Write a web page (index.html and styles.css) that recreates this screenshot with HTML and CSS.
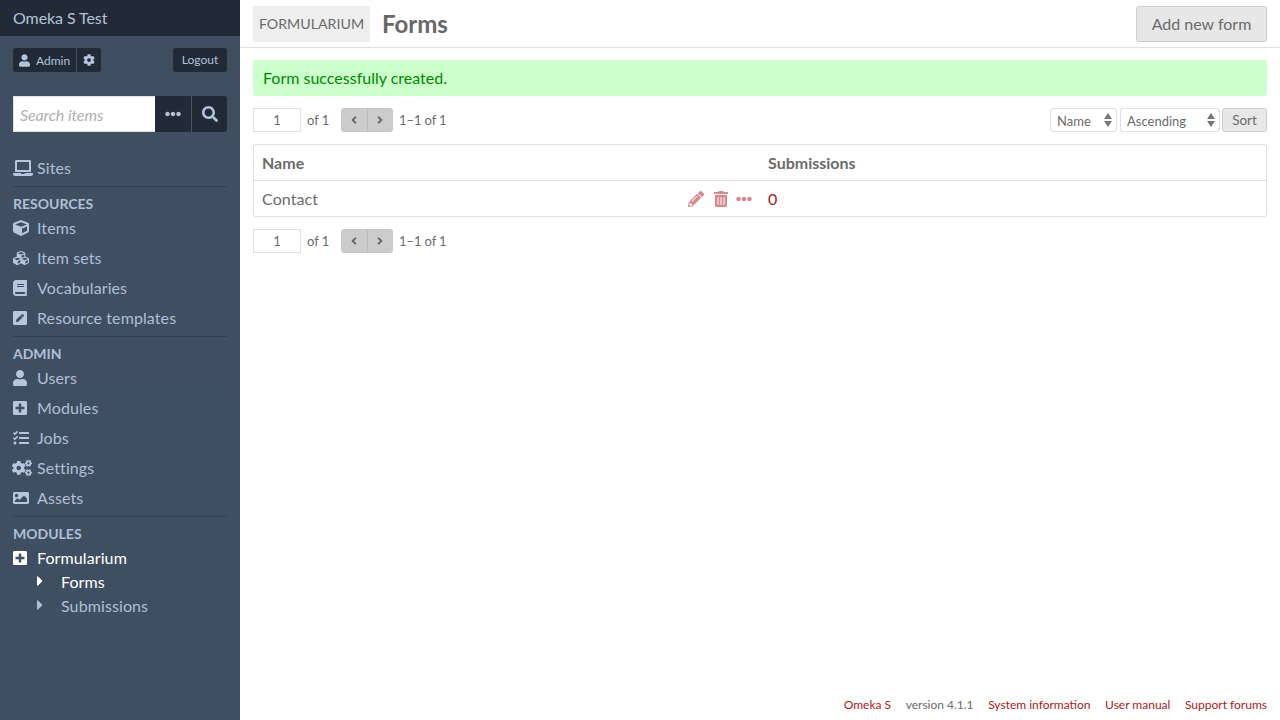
FILE: index.html
```html
<!DOCTYPE html>
<html lang="en">
<head>
<meta charset="utf-8">
<title>Forms · Omeka S Test</title>
<link rel="stylesheet" href="styles.css">
</head>
<body>
<svg class="defs" aria-hidden="true">
<symbol id="user" viewBox="0 0 448 512"><path d="M224 256c70.7 0 128-57.3 128-128S294.7 0 224 0 96 57.3 96 128s57.3 128 128 128zm89.6 32h-16.7c-22.2 10.2-46.9 16-72.9 16s-50.6-5.8-72.9-16h-16.7C60.2 288 0 348.2 0 422.4V464c0 26.5 21.5 48 48 48h352c26.5 0 48-21.5 48-48v-41.6c0-74.2-60.2-134.4-134.4-134.4z"/></symbol>
<symbol id="cog" viewBox="0 0 512 512"><path d="M487.4 315.7l-42.6-24.6c4.3-23.2 4.3-47 0-70.2l42.6-24.6c4.9-2.8 7.1-8.6 5.5-14-11.1-35.6-30-67.8-54.7-94.6-3.8-4.1-10-5.1-14.8-2.3L380.8 110c-17.9-15.4-38.5-27.3-60.8-35.1V25.8c0-5.6-3.9-10.5-9.4-11.7-36.7-8.2-74.3-7.8-109.2 0-5.5 1.2-9.4 6.1-9.4 11.7V75c-22.2 7.9-42.8 19.8-60.8 35.1L88.7 85.5c-4.9-2.8-11-1.9-14.8 2.3-24.7 26.7-43.6 58.9-54.7 94.6-1.7 5.4.6 11.2 5.5 14L67.3 221c-4.3 23.2-4.3 47 0 70.2l-42.6 24.6c-4.9 2.8-7.1 8.6-5.5 14 11.1 35.6 30 67.8 54.7 94.6 3.8 4.1 10 5.1 14.8 2.3l42.6-24.6c17.9 15.4 38.5 27.3 60.8 35.1v49.2c0 5.6 3.9 10.5 9.4 11.7 36.7 8.2 74.3 7.8 109.2 0 5.5-1.2 9.4-6.1 9.4-11.7v-49.2c22.2-7.9 42.8-19.8 60.8-35.1l42.6 24.6c4.9 2.8 11 1.9 14.8-2.3 24.7-26.7 43.6-58.9 54.7-94.6 1.5-5.5-.7-11.3-5.6-14.1zM256 336c-44.1 0-80-35.9-80-80s35.9-80 80-80 80 35.9 80 80-35.9 80-80 80z"/></symbol>
<symbol id="search" viewBox="0 0 512 512"><path d="M505 442.7L405.3 343c-4.5-4.5-10.6-7-17-7H372c27.6-35.3 44-79.7 44-128C416 93.1 322.9 0 208 0S0 93.1 0 208s93.1 208 208 208c48.3 0 92.7-16.4 128-44v16.3c0 6.4 2.5 12.5 7 17l99.7 99.7c9.4 9.4 24.6 9.4 33.9 0l28.3-28.3c9.4-9.4 9.4-24.6.1-34zM208 336c-70.7 0-128-57.2-128-128 0-70.7 57.2-128 128-128 70.7 0 128 57.2 128 128 0 70.7-57.2 128-128 128z"/></symbol>
<symbol id="dots" viewBox="0 0 512 512"><path d="M328 256c0 39.8-32.2 72-72 72s-72-32.2-72-72 32.2-72 72-72 72 32.2 72 72zm104-72c-39.8 0-72 32.2-72 72s32.2 72 72 72 72-32.2 72-72-32.2-72-72-72zm-352 0c-39.8 0-72 32.2-72 72s32.2 72 72 72 72-32.2 72-72-32.2-72-72-72z"/></symbol>
<symbol id="laptop" viewBox="0 0 640 512"><path d="M624 416H381.54c-.74 19.81-14.71 32-32.74 32H288c-18.69 0-33.02-17.47-32.77-32H16c-8.8 0-16 7.2-16 16v16c0 35.2 28.8 64 64 64h512c35.2 0 64-28.8 64-64v-16c0-8.8-7.2-16-16-16zM576 48c0-26.4-21.6-48-48-48H112C85.6 0 64 21.6 64 48v336h512V48zm-64 272H128V64h384v256z"/></symbol>
<symbol id="cube" viewBox="0 0 512 512"><path d="M239.1 6.3l-208 78c-18.7 7-31.1 25-31.1 45v225.1c0 18.2 10.3 34.8 26.5 42.9l208 104c13.5 6.8 29.4 6.8 42.9 0l208-104c16.3-8.1 26.5-24.8 26.5-42.9V129.3c0-20-12.4-37.9-31.1-44.9l-208-78C262 2.2 250 2.2 239.1 6.3zM256 68.4l192 72v1.1l-192 78-192-78v-1.1l192-72zm32 356V275.5l160-65v133.9l-160 80z"/></symbol>
<symbol id="cubes" viewBox="0 0 512 512"><path d="M488.6 250.2L392 214V105.5c0-15-9.3-28.4-23.4-33.7l-100-37.5c-8.1-3.1-17.1-3.1-25.3 0l-100 37.5c-14.1 5.3-23.4 18.7-23.4 33.7V214l-96.6 36.2C9.3 255.5 0 268.9 0 283.9V394c0 13.6 7.7 26.1 19.9 32.2l100 50c10.1 5.1 22.1 5.1 32.2 0l103.9-52 103.9 52c10.1 5.1 22.1 5.1 32.2 0l100-50c12.2-6.1 19.9-18.6 19.9-32.2V283.9c0-15-9.3-28.4-23.4-33.7zM358 214.8l-85 31.9v-68.2l85-37v73.3zM154 104.1l102-38.2 102 38.2v.6l-102 41.4-102-41.4v-.6zm84 291.1l-85 42.5v-79.1l85-38.8v75.4zm0-112l-102 41.4-102-41.4v-.6l102-38.2 102 38.2v.6zm240 112l-85 42.5v-79.1l85-38.8v75.4zm0-112l-102 41.4-102-41.4v-.6l102-38.2 102 38.2v.6z"/></symbol>
<symbol id="book" viewBox="0 0 448 512"><path d="M448 360V24c0-13.3-10.7-24-24-24H96C43 0 0 43 0 96v320c0 53 43 96 96 96h328c13.3 0 24-10.7 24-24v-16c0-7.5-3.5-14.3-8.9-18.7-4.2-15.4-4.2-59.3 0-74.7 5.4-4.3 8.9-11.1 8.9-18.6zM128 134c0-3.3 2.7-6 6-6h212c3.3 0 6 2.7 6 6v20c0 3.3-2.7 6-6 6H134c-3.3 0-6-2.7-6-6v-20zm0 64c0-3.3 2.7-6 6-6h212c3.3 0 6 2.7 6 6v20c0 3.3-2.7 6-6 6H134c-3.3 0-6-2.7-6-6v-20zm253.4 250H96c-17.7 0-32-14.3-32-32 0-17.6 14.4-32 32-32h285.4c-1.9 17.1-1.9 46.9 0 64z"/></symbol>
<symbol id="pensq" viewBox="0 0 448 512"><path d="M400 480H48c-26.5 0-48-21.5-48-48V80c0-26.5 21.5-48 48-48h352c26.5 0 48 21.5 48 48v352c0 26.5-21.5 48-48 48zM238.1 177.9L102.4 313.6l-6.3 57.1c-.8 7.6 5.6 14.1 13.3 13.3l57.1-6.3L302.2 242c2.3-2.3 2.3-6.1 0-8.5L246.7 178c-2.5-2.4-6.3-2.4-8.6-.1zM345 165.1L314.9 135c-9.4-9.4-24.6-9.4-33.9 0l-23.1 23.1c-2.3 2.3-2.3 6.1 0 8.5l55.5 55.5c2.3 2.3 6.1 2.3 8.5 0L345 199c9.3-9.3 9.3-24.5 0-33.9z"/></symbol>
<symbol id="plussq" viewBox="0 0 448 512"><path d="M400 32H48C21.5 32 0 53.5 0 80v352c0 26.5 21.5 48 48 48h352c26.5 0 48-21.5 48-48V80c0-26.5-21.5-48-48-48zm-32 252c0 6.6-5.4 12-12 12h-92v92c0 6.6-5.4 12-12 12h-56c-6.6 0-12-5.4-12-12v-92H92c-6.6 0-12-5.4-12-12v-56c0-6.6 5.4-12 12-12h92v-92c0-6.6 5.4-12 12-12h56c6.6 0 12 5.4 12 12v92h92c6.6 0 12 5.4 12 12v56z"/></symbol>
<symbol id="tasks" viewBox="0 0 512 512"><path d="M139.61 35.5a12 12 0 0 0-17 0L58.93 98.81l-22.7-22.12a12 12 0 0 0-17 0L3.53 92.41a12 12 0 0 0 0 17l47.59 47.4a12.78 12.78 0 0 0 17.61 0l15.59-15.62L156.52 69a12.09 12.09 0 0 0 .09-17zm0 159.19a12 12 0 0 0-17 0l-63.68 63.72-22.7-22.1a12 12 0 0 0-17 0L3.53 252a12 12 0 0 0 0 17L51 316.5a12.77 12.77 0 0 0 17.6 0l15.7-15.69 72.2-72.22a12 12 0 0 0 .09-16.9zM64 368c-26.49 0-48.59 21.5-48.59 48S37.53 464 64 464a48 48 0 0 0 0-96zm432 16H208a16 16 0 0 0-16 16v32a16 16 0 0 0 16 16h288a16 16 0 0 0 16-16v-32a16 16 0 0 0-16-16zm0-320H208a16 16 0 0 0-16 16v32a16 16 0 0 0 16 16h288a16 16 0 0 0 16-16V80a16 16 0 0 0-16-16zm0 160H208a16 16 0 0 0-16 16v32a16 16 0 0 0 16 16h288a16 16 0 0 0 16-16v-32a16 16 0 0 0-16-16z"/></symbol>
<symbol id="cogs" viewBox="0 0 640 512"><path d="M512.1 191l-8.2 14.3c-3 5.3-9.4 7.5-15.1 5.4-11.8-4.4-22.6-10.7-32.1-18.6-4.6-3.8-5.8-10.5-2.8-15.7l8.2-14.3c-6.9-8-12.3-17.3-15.9-27.4h-16.5c-6 0-11.2-4.3-12.2-10.3-2-12-2.1-24.6 0-37.1 1-6 6.2-10.4 12.2-10.4h16.5c3.6-10.1 9-19.4 15.9-27.4l-8.2-14.3c-3-5.2-1.9-11.9 2.8-15.7 9.5-7.9 20.4-14.2 32.1-18.6 5.7-2.1 12.1.1 15.1 5.4l8.2 14.3c10.5-1.9 21.2-1.9 31.7 0L552 6.3c3-5.3 9.4-7.5 15.1-5.4 11.8 4.4 22.6 10.7 32.1 18.6 4.6 3.8 5.8 10.5 2.8 15.7l-8.2 14.3c6.9 8 12.3 17.3 15.9 27.4h16.5c6 0 11.2 4.3 12.2 10.3 2 12 2.1 24.6 0 37.1-1 6-6.2 10.4-12.2 10.4h-16.5c-3.6 10.1-9 19.4-15.9 27.4l8.2 14.3c3 5.2 1.9 11.9-2.8 15.7-9.5 7.9-20.4 14.2-32.1 18.6-5.7 2.1-12.1-.1-15.1-5.4l-8.2-14.3c-10.4 1.9-21.2 1.9-31.7 0zm-10.5-58.8c38.5 29.6 82.4-14.3 52.8-52.8-38.5-29.7-82.4 14.3-52.8 52.8zM386.3 286.1l33.7 16.8c10.1 5.8 14.5 18.1 10.5 29.1-8.9 24.2-26.4 46.4-42.6 65.8-7.4 8.9-20.2 11.1-30.3 5.3l-29.1-16.8c-16 13.7-34.6 24.6-54.9 31.7v33.6c0 11.6-8.3 21.6-19.7 23.6-24.6 4.2-50.4 4.4-75.9 0-11.5-2-20-11.9-20-23.6V418c-20.3-7.2-38.9-18-54.9-31.7L74 403c-10 5.8-22.9 3.6-30.3-5.3-16.2-19.4-33.3-41.6-42.2-65.7-4-10.9.4-23.2 10.5-29.1l33.3-16.8c-3.9-20.9-3.9-42.4 0-63.4L12 205.8c-10.1-5.8-14.6-18.1-10.5-29 8.9-24.2 26-46.4 42.2-65.8 7.4-8.9 20.2-11.1 30.3-5.3l29.1 16.8c16-13.7 34.6-24.6 54.9-31.7V57.1c0-11.5 8.2-21.5 19.6-23.5 24.6-4.2 50.5-4.4 76-.1 11.5 2 20 11.9 20 23.6v33.6c20.3 7.2 38.9 18 54.9 31.7l29.1-16.8c10-5.8 22.9-3.6 30.3 5.3 16.2 19.4 33.2 41.6 42.1 65.8 4 10.9.1 23.2-10 29.1l-33.7 16.8c3.9 21 3.9 42.5 0 63.5zm-117.6 21.1c59.2-77-28.7-164.9-105.7-105.7-59.2 77 28.7 164.9 105.7 105.7zm243.4 182.7l-8.2 14.3c-3 5.3-9.4 7.5-15.1 5.4-11.8-4.4-22.6-10.7-32.1-18.6-4.6-3.8-5.8-10.5-2.8-15.7l8.2-14.3c-6.9-8-12.3-17.3-15.9-27.4h-16.5c-6 0-11.2-4.3-12.2-10.3-2-12-2.1-24.6 0-37.1 1-6 6.2-10.4 12.2-10.4h16.5c3.6-10.1 9-19.4 15.9-27.4l-8.2-14.3c-3-5.2-1.9-11.9 2.8-15.7 9.5-7.9 20.4-14.2 32.1-18.6 5.7-2.1 12.1.1 15.1 5.4l8.2 14.3c10.5-1.9 21.2-1.9 31.7 0l8.2-14.3c3-5.3 9.4-7.5 15.1-5.4 11.8 4.4 22.6 10.7 32.1 18.6 4.6 3.8 5.8 10.5 2.8 15.7l-8.2 14.3c6.9 8 12.3 17.3 15.9 27.4h16.5c6 0 11.2 4.3 12.2 10.3 2 12 2.1 24.6 0 37.1-1 6-6.2 10.4-12.2 10.4h-16.5c-3.6 10.1-9 19.4-15.9 27.4l8.2 14.3c3 5.2 1.9 11.9-2.8 15.7-9.5 7.9-20.4 14.2-32.1 18.6-5.7 2.1-12.1-.1-15.1-5.4l-8.2-14.3c-10.4 1.9-21.2 1.9-31.7 0zM501.6 431c38.5 29.6 82.4-14.3 52.8-52.8-38.5-29.6-82.4 14.3-52.8 52.8z"/></symbol>
<symbol id="image" viewBox="0 0 512 512"><path d="M464 448H48c-26.51 0-48-21.49-48-48V112c0-26.51 21.49-48 48-48h416c26.51 0 48 21.49 48 48v288c0 26.51-21.49 48-48 48zM112 120c-30.928 0-56 25.072-56 56s25.072 56 56 56 56-25.072 56-56-25.072-56-56-56zM64 384h384V272l-87.515-87.515c-4.686-4.686-12.284-4.686-16.971 0L208 320l-55.515-55.515c-4.686-4.686-12.284-4.686-16.971 0L64 336v48z"/></symbol>
<symbol id="caret" viewBox="0 0 192 512"><path d="M0 384.662V127.338c0-17.818 21.543-26.741 34.142-14.142l128.662 128.662c7.81 7.81 7.81 20.474 0 28.284L34.142 398.804C21.543 411.404 0 402.48 0 384.662z"/></symbol>
<symbol id="prev" viewBox="0 0 256 512"><path d="M31.7 239l136-136c9.4-9.4 24.6-9.4 33.9 0l22.6 22.6c9.4 9.4 9.4 24.6 0 33.9L127.9 256l96.4 96.4c9.4 9.4 9.4 24.6 0 33.9L201.7 409c-9.4 9.4-24.6 9.4-33.9 0l-136-136c-9.5-9.4-9.5-24.6-.1-34z"/></symbol>
<symbol id="next" viewBox="0 0 256 512"><path d="M224.3 273l-136 136c-9.4 9.4-24.6 9.4-33.9 0l-22.6-22.6c-9.4-9.4-9.4-24.6 0-33.9l96.4-96.4-96.4-96.4c-9.4-9.4-9.4-24.6 0-33.9L54.3 103c9.4-9.4 24.6-9.4 33.9 0l136 136c9.5 9.4 9.5 24.6.1 34z"/></symbol>
<symbol id="pencil" viewBox="0 0 512 512"><path d="M497.9 142.1l-46.1 46.1c-4.7 4.7-12.3 4.7-17 0l-111-111c-4.7-4.7-4.7-12.3 0-17l46.1-46.1c18.7-18.7 49.1-18.7 67.9 0l60.1 60.1c18.8 18.7 18.8 49.1 0 67.9zM284.2 99.8L21.6 362.4.4 483.9c-2.9 16.4 11.4 30.6 27.8 27.8l121.5-21.3 262.6-262.6c4.7-4.7 4.7-12.3 0-17l-111-111c-4.8-4.7-12.4-4.7-17.1 0zM124.1 339.9c-5.5-5.5-5.5-14.3 0-19.8l154-154c5.5-5.5 14.3-5.5 19.8 0s5.5 14.3 0 19.8l-154 154c-5.5 5.5-14.3 5.5-19.8 0zM88 424h48v36.3l-64.5 11.3-31.1-31.1L51.7 376H88v48z"/></symbol>
<symbol id="trash" viewBox="0 0 448 512"><path d="M32 464a48 48 0 0 0 48 48h288a48 48 0 0 0 48-48V128H32zm272-256a16 16 0 0 1 32 0v224a16 16 0 0 1-32 0zm-96 0a16 16 0 0 1 32 0v224a16 16 0 0 1-32 0zm-96 0a16 16 0 0 1 32 0v224a16 16 0 0 1-32 0zM432 32H312l-9.4-18.7A24 24 0 0 0 281.1 0H166.8a23.72 23.72 0 0 0-21.4 13.3L136 32H16A16 16 0 0 0 0 48v32a16 16 0 0 0 16 16h416a16 16 0 0 0 16-16V48a16 16 0 0 0-16-16z"/></symbol>
</svg>

<div class="app">
  <aside class="sidebar">
    <header class="site-title">Omeka S Test</header>
    <div class="user-bar">
      <div class="user-group">
        <a class="user-name"><svg class="ico-user"><use href="#user"/></svg>Admin</a>
        <a class="user-cog"><svg class="ico-cog"><use href="#cog"/></svg></a>
      </div>
      <a class="logout">Logout</a>
    </div>
    <form class="search">
      <input class="search-input" placeholder="Search items">
      <span class="search-btn more"><svg class="ico-dots"><use href="#dots"/></svg></span>
      <span class="search-btn go"><svg class="ico-search"><use href="#search"/></svg></span>
    </form>
    <nav class="nav">
      <ul class="nav-group first">
        <li class="nav-item"><svg class="nav-ico w20"><use href="#laptop"/></svg>Sites</li>
      </ul>
      <h4 class="nav-head">RESOURCES</h4>
      <ul class="nav-group">
        <li class="nav-item"><svg class="nav-ico w16"><use href="#cube"/></svg>Items</li>
        <li class="nav-item"><svg class="nav-ico w16"><use href="#cubes"/></svg>Item sets</li>
        <li class="nav-item"><svg class="nav-ico w14"><use href="#book"/></svg>Vocabularies</li>
        <li class="nav-item"><svg class="nav-ico w14"><use href="#pensq"/></svg>Resource templates</li>
      </ul>
      <h4 class="nav-head">ADMIN</h4>
      <ul class="nav-group">
        <li class="nav-item"><svg class="nav-ico w14"><use href="#user"/></svg>Users</li>
        <li class="nav-item"><svg class="nav-ico w14"><use href="#plussq"/></svg>Modules</li>
        <li class="nav-item"><svg class="nav-ico w16"><use href="#tasks"/></svg>Jobs</li>
        <li class="nav-item"><svg class="nav-ico w20 cogs"><use href="#cogs"/></svg>Settings</li>
        <li class="nav-item"><svg class="nav-ico w16"><use href="#image"/></svg>Assets</li>
      </ul>
      <h4 class="nav-head">MODULES</h4>
      <ul class="nav-modules">
        <li class="nav-item active"><svg class="nav-ico w14"><use href="#plussq"/></svg>Formularium</li>
        <li class="nav-sub active"><svg class="sub-ico"><use href="#caret"/></svg>Forms</li>
        <li class="nav-sub"><svg class="sub-ico"><use href="#caret"/></svg>Submissions</li>
      </ul>
    </nav>
  </aside>

  <div class="content">
    <header class="page-head">
      <span class="module-tag">FORMULARIUM</span>
      <h1 class="page-title">Forms</h1>
      <a class="add-btn">Add new form</a>
    </header>
    <main class="page-main">
      <div class="message">Form successfully created.</div>
      <div class="toolbar">
        <div class="pager">
          <input class="page-input" value="1">
          <span class="of">of 1</span>
          <span class="pager-btns">
            <span class="pager-btn"><svg class="ico-page"><use href="#prev"/></svg></span>
            <span class="pager-btn"><svg class="ico-page"><use href="#next"/></svg></span>
          </span>
          <span class="range">1–1 of 1</span>
        </div>
        <div class="sorter">
          <span class="select sel-name">Name<span class="arrows"></span></span>
          <span class="select sel-order">Ascending<span class="arrows"></span></span>
          <span class="sort-btn">Sort</span>
        </div>
      </div>
      <div class="table">
        <div class="row head">
          <div class="col-name">Name</div>
          <div class="col-sub">Submissions</div>
        </div>
        <div class="row body">
          <div class="col-name">
            <span class="record">Contact</span>
            <span class="actions">
              <svg class="act-pencil"><use href="#pencil"/></svg>
              <svg class="act-trash"><use href="#trash"/></svg>
              <svg class="act-dots"><use href="#dots"/></svg>
            </span>
          </div>
          <div class="col-sub link">0</div>
        </div>
      </div>
      <div class="pager bottom">
        <input class="page-input" value="1">
        <span class="of">of 1</span>
        <span class="pager-btns">
          <span class="pager-btn"><svg class="ico-page"><use href="#prev"/></svg></span>
          <span class="pager-btn"><svg class="ico-page"><use href="#next"/></svg></span>
        </span>
        <span class="range">1–1 of 1</span>
      </div>
    </main>
    <footer class="footer">
      <a>Omeka S</a>
      <span class="version">version 4.1.1</span>
      <a>System information</a>
      <a>User manual</a>
      <a>Support forums</a>
    </footer>
  </div>
</div>
</body>
</html>
```

FILE: styles.css
```css
* { box-sizing: border-box; }
html, body { margin: 0; height: 100%; overflow: hidden; }
body { font-family: Lato, sans-serif; color: #6b6b6b; background: #fff; font-size: 16px; }
.defs { display: none; }
ul { list-style: none; margin: 0; padding: 0; }
h1, h4 { margin: 0; }
svg { fill: currentColor; display: block; flex: none; }

.app { display: flex; height: 100vh; }

.sidebar { width: 240px; flex: none; background: linear-gradient(#3f4e61, #3f4f62); color: #b4c3d9; }
.site-title { height: 36px; line-height: 36px; padding-left: 13px; background: #212a36; font-size: 16px; letter-spacing: -.08px; color: #b4c3d9; }

.user-bar { display: flex; justify-content: space-between; margin: 12px 13px 0; height: 24px; font-size: 12px; }
.user-group { display: flex; gap: 1px; }
.user-name, .user-cog, .logout { background: #212a36; display: flex; align-items: center; color: #b4c3d9; height: 24px; }
.user-name { width: 63px; padding-left: 6px; border-radius: 3px 0 0 3px; }
.ico-user { width: 11px; height: 13px; margin-right: 6px; }
.user-cog { width: 24px; justify-content: center; border-radius: 0 3px 3px 0; }
.ico-cog { width: 12px; height: 12px; }
.logout { width: 54px; justify-content: center; border-radius: 3px; padding-bottom: 1px; }

.search { display: flex; margin: 24px 13px 0; height: 36px; }
.search-input { width: 142px; height: 36px; border: 1px solid #dfdfdf; border-right: 0; background: #fff; padding: 0 6px; font: italic 16px Lato, sans-serif; letter-spacing: -.1px; outline: 0; }
.search-input::placeholder { color: #b0b0b0; opacity: 1; }
.search-btn { background: #212a36; color: #b4c3d9; display: flex; align-items: center; justify-content: center; height: 36px; }
.more { width: 37px; border-right: 1px solid #4a5564; }
.go { width: 35px; border-radius: 0 3px 3px 0; }
.ico-dots { width: 16px; height: 16px; }
.ico-search { width: 16px; height: 16px; }

.nav { margin: 21px 13px 0 13px; }
.nav-group { border-bottom: 1px solid #343f4e; padding-bottom: 3px; }
.nav-head { font-size: 14px; font-weight: 700; line-height: 21px; padding-top: 6px; height: 26px; color: #b0bfd5; }
.nav-item { height: 30px; display: flex; align-items: center; font-size: 16px; letter-spacing: .1px; color: #b0bfd5; position: relative; padding: 0 0 2px 24px; }
.nav-ico { position: absolute; left: 0; top: 7px; height: 16px; color: #b7c6dc; }
.w14 { width: 14px; }
.w16 { width: 16px; }
.w20 { width: 20px; }
.cogs { left: -1px; }
.nav-sub { height: 24px; display: flex; align-items: center; padding: 0 0 2px 24px; gap: 18px; font-size: 16px; letter-spacing: .1px; color: #b0bfd5; }
.nav-sub.active, .nav-item.active, .active .nav-ico { color: #fff; }
.nav-modules .nav-sub:nth-child(2) { margin-top: -3px; }
.sub-ico { width: 6px; height: 16px; }

.content { flex: 1; display: flex; flex-direction: column; min-width: 0; }
.page-head { height: 48px; border-bottom: 1px solid #dfdfdf; padding: 6px 13px 0; display: flex; align-items: flex-start; }
.module-tag { height: 36px; line-height: 36px; width: 117px; text-align: center; background: #eee; font-size: 14.2px; }
.page-title { font-size: 24px; font-weight: 700; line-height: 36px; margin-left: 12px; color: #676767; }
.add-btn { margin-left: auto; height: 36px; line-height: 34px; width: 131px; text-align: center; background: #e7e7e7; border: 1px solid #ccc; border-radius: 3px; font-size: 16px; }

.page-main { flex: 1; padding: 12px 13px 0; }
.message { height: 36px; line-height: 36px; padding-left: 10px; background: #cfc; color: #080; border-radius: 3px; font-size: 16px; }
.toolbar { display: flex; justify-content: space-between; margin-top: 12px; height: 24px; }
.pager { display: flex; align-items: center; height: 24px; font-size: 13px; }
.pager.bottom { margin-top: 12px; }
.page-input { width: 48px; height: 24px; border: 1px solid #dfdfdf; text-align: center; font: 13px Lato, sans-serif; color: #6b6b6b; padding: 0; outline: 0; }
.of { margin-left: 6px; width: 34px; }
.pager-btns { display: flex; background: #ccc; border: 1px solid #c6c6c6; border-radius: 3px; height: 24px; width: 52px; }
.pager-btn { flex: 1; display: flex; align-items: center; justify-content: center; color: #666; }
.pager-btn + .pager-btn { border-left: 1px solid #bbb; }
.ico-page { width: 8px; height: 12px; }
.range { margin-left: 6px; letter-spacing: -.1px; }

.sorter { display: flex; gap: 3px; font-size: 13px; }
.select { position: relative; height: 24px; line-height: 24px; padding-left: 6px; border: 1px solid #dfdfdf; border-radius: 3px; background: #fff; }
.sel-name { width: 67px; }
.sel-order { width: 100px; }
.arrows { position: absolute; right: 4px; top: 4px; width: 8px; height: 14px; }
.arrows::before, .arrows::after { content: ""; position: absolute; left: 0; border-left: 4px solid transparent; border-right: 4px solid transparent; }
.arrows::before { top: 0; border-bottom: 6px solid #777; }
.arrows::after { bottom: 0; border-top: 6px solid #777; }
.sort-btn { width: 45px; height: 24px; line-height: 22px; margin-left: -1px; text-align: center; background: #e7e7e7; border: 1px solid #ccc; border-radius: 3px; font-size: 13.5px; }

.table { margin-top: 12px; border: 1px solid #dfdfdf; border-radius: 3px; }
.row { display: flex; align-items: center; font-size: 16px; }
.row.head { height: 36px; font-weight: 700; border-bottom: 1px solid #dfdfdf; }
.row.body { height: 35px; }
.col-name { width: 514px; padding: 0 16px 0 8px; display: flex; align-items: center; justify-content: space-between; flex: none; }
.col-sub { flex: 1; }
.record { letter-spacing: .1px; }
.link { color: #a91919; }
.actions { display: flex; align-items: center; color: #d48a8e; margin-top: 1px; }
.act-pencil { width: 16px; height: 16px; }
.act-trash { width: 14px; height: 16px; margin-left: 10px; }
.act-dots { width: 16px; height: 16px; margin-left: 8px; }

.footer { height: 30px; padding: 0 13px 2px; display: flex; justify-content: flex-end; align-items: center; gap: 14.6px; font-size: 12px; }
.footer a { color: #a91919; }
```
